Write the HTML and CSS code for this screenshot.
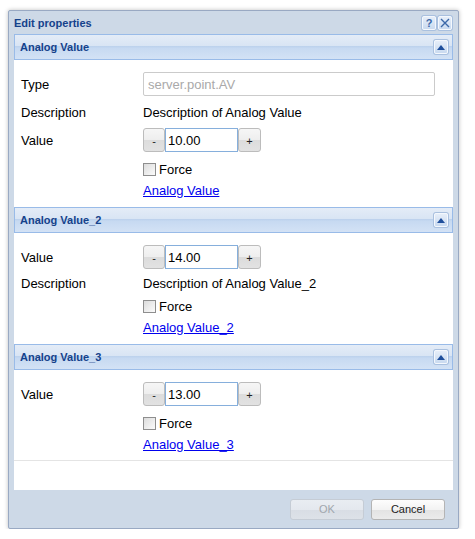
FILE: index.html
```html
<!DOCTYPE html>
<html>
<head>
<meta charset="utf-8">
<title>Edit properties</title>
<link rel="stylesheet" href="styles.css">
</head>
<body>
<div class="window">
  <div class="titlebar">
    <span class="title">Edit properties</span>
    <div class="tools">
      <span class="tool tool-help">?</span>
      <span class="tool">
        <svg width="10" height="10" viewBox="0 0 10 10"><path d="M1 1 L9 9 M9 1 L1 9" stroke="#3b68a8" stroke-width="1.4" fill="none"/></svg>
      </span>
    </div>
  </div>

  <div class="panel">
    <div class="sections">
      <section class="section">
        <div class="sec-header">
          <span class="sec-title">Analog Value</span>
          <span class="tool">
            <svg width="8" height="5" viewBox="0 0 8 5"><path d="M0 5 L4 0 L8 5 Z" fill="#1f4f9c"/></svg>
          </span>
        </div>
        <div class="sec-body">
          <div class="row row-first">
            <span class="label">Type</span>
            <input class="text-input" type="text" value="server.point.AV" readonly>
          </div>
          <div class="row row-text gap6">
            <span class="label">Description</span>
            <span class="value-text">Description of Analog Value</span>
          </div>
          <div class="row gap6">
            <span class="label">Value</span>
            <div class="stepper">
              <span class="step-btn">-</span>
              <input class="num-input" type="text" value="10.00">
              <span class="step-btn step-plus">+</span>
            </div>
          </div>
          <div class="row row-text gap7 offset">
            <label class="check"><input type="checkbox"><span>Force</span></label>
          </div>
          <div class="row row-text gap1 offset">
            <a href="#" class="link">Analog Value</a>
          </div>
        </div>
      </section>

      <section class="section">
        <div class="sec-header">
          <span class="sec-title">Analog Value_2</span>
          <span class="tool">
            <svg width="8" height="5" viewBox="0 0 8 5"><path d="M0 5 L4 0 L8 5 Z" fill="#1f4f9c"/></svg>
          </span>
        </div>
        <div class="sec-body">
          <div class="row row-first">
            <span class="label">Value</span>
            <div class="stepper">
              <span class="step-btn">-</span>
              <input class="num-input" type="text" value="14.00">
              <span class="step-btn step-plus">+</span>
            </div>
          </div>
          <div class="row row-text gap4">
            <span class="label">Description</span>
            <span class="value-text">Description of Analog Value_2</span>
          </div>
          <div class="row row-text gap3 offset">
            <label class="check"><input type="checkbox"><span>Force</span></label>
          </div>
          <div class="row row-text gap1 offset">
            <a href="#" class="link">Analog Value_2</a>
          </div>
        </div>
      </section>

      <section class="section section-last">
        <div class="sec-header">
          <span class="sec-title">Analog Value_3</span>
          <span class="tool">
            <svg width="8" height="5" viewBox="0 0 8 5"><path d="M0 5 L4 0 L8 5 Z" fill="#1f4f9c"/></svg>
          </span>
        </div>
        <div class="sec-body">
          <div class="row row-first">
            <span class="label">Value</span>
            <div class="stepper">
              <span class="step-btn">-</span>
              <input class="num-input" type="text" value="13.00">
              <span class="step-btn step-plus">+</span>
            </div>
          </div>
          <div class="row row-text gap7 offset">
            <label class="check"><input type="checkbox"><span>Force</span></label>
          </div>
          <div class="row row-text gap1 offset">
            <a href="#" class="link">Analog Value_3</a>
          </div>
        </div>
      </section>
    </div>
  </div>

  <div class="footer">
    <button class="btn" disabled>OK</button>
    <button class="btn">Cancel</button>
  </div>
</div>
</body>
</html>
```

FILE: styles.css
```css
* { box-sizing: border-box; }

body {
  margin: 0;
  background: #ffffff;
  font-family: "Liberation Sans", Arial, sans-serif;
  color: #000;
}

.window {
  margin: 10px 0 0 8px;
  width: 451px;
  height: 519px;
  border: 1px solid #99a9c3;
  border-radius: 2px;
  background: #cdd9e7;
  box-shadow: 0 0 4px rgba(0, 0, 0, 0.25);
  display: flex;
  flex-direction: column;
}

.titlebar {
  height: 23px;
  display: flex;
  align-items: center;
  justify-content: space-between;
  padding: 1px 6px 0 5px;
}

.title {
  font-size: 11px;
  font-weight: bold;
  color: #15428b;
}

.tools {
  display: flex;
  gap: 2px;
}

.tool {
  width: 14px;
  height: 14px;
  border: 1px solid #f4f8fd;
  border-radius: 2px;
  background: linear-gradient(#e6eef9, #c9daf0);
  box-shadow: 0 0 0 1px #a9c0df;
  display: flex;
  align-items: center;
  justify-content: center;
}

.tool-help {
  font-size: 11px;
  font-weight: bold;
  color: #3b68a8;
  line-height: 1;
}

.panel {
  margin: 0 5px;
  height: 456px;
  background: #ffffff;
}

.sec-header {
  height: 26px;
  border: 1px solid #99bbe8;
  background: linear-gradient(to bottom, #e4ecf7 0%, #d9e5f4 44%, #b6cdeb 49%, #c6d9f1 53%, #d3e2f5 100%);
  display: flex;
  align-items: center;
  justify-content: space-between;
  padding: 0 4px 0 5px;
}

.sec-title {
  font-size: 11px;
  font-weight: bold;
  color: #15428b;
}

.sec-body {
  padding: 12px 7px 7px 7px;
  font-size: 13px;
}

.section-last .sec-body {
  padding-bottom: 6px;
  border-bottom: 1px solid #e4e4e4;
}

.row {
  display: flex;
  align-items: center;
  height: 24px;
}

.row-text { height: 20px; }
.gap1 { margin-top: 1px; }
.gap3 { margin-top: 3px; }
.gap4 { margin-top: 4px; }
.gap6 { margin-top: 6px; }
.gap7 { margin-top: 7px; }
.offset { padding-left: 122px; }

.label {
  width: 122px;
  flex: none;
}

.value-text { white-space: nowrap; }

.text-input {
  width: 292px;
  height: 24px;
  border: 1px solid #cbcbcb;
  border-radius: 2px;
  padding: 0 4px;
  font: 13px "Liberation Sans", Arial, sans-serif;
  color: #a9a9a9;
  background: #fff;
  outline: none;
}

.stepper {
  display: flex;
  align-items: stretch;
  height: 24px;
}

.step-btn {
  width: 22px;
  border: 1px solid #bcbcbc;
  border-radius: 3px;
  background: linear-gradient(#f6f6f6 0%, #eeeeee 50%, #dcdcdc 51%, #e2e2e2 100%);
  font-size: 11px;
  display: flex;
  justify-content: center;
  align-items: flex-end;
  padding-bottom: 4px;
  color: #222;
}

.step-plus { width: 23px; }

.num-input {
  width: 73px;
  height: 24px;
  border: 1px solid #86afdc;
  padding: 0 2px;
  font: 13px "Liberation Sans", Arial, sans-serif;
  color: #000;
  outline: none;
}

.check {
  display: flex;
  align-items: center;
  gap: 3px;
}

.check input {
  appearance: none;
  margin: 0;
  width: 13px;
  height: 13px;
  border: 1px solid #8e8e8e;
  background: linear-gradient(135deg, #dcdcdc, #fbfbfb);
}

.link {
  color: #0000ee;
  text-decoration: underline;
}

.footer {
  flex: 1;
  display: flex;
  justify-content: flex-end;
  align-items: center;
  gap: 7px;
  padding-right: 13px;
}

.btn {
  width: 74px;
  height: 21px;
  border: 1px solid #b4b4b4;
  border-radius: 3px;
  background: linear-gradient(#fdfdfd 0%, #f3f3f3 50%, #e3e3e3 51%, #ebebeb 100%);
  font: 11px "Liberation Sans", Arial, sans-serif;
  color: #222;
  padding: 0;
}

.btn:disabled {
  border-color: #c5ccd5;
  background: linear-gradient(#e9edf2 0%, #e4e8ee 50%, #d8dde4 51%, #dde2e8 100%);
  color: #a0a6ad;
}
```
